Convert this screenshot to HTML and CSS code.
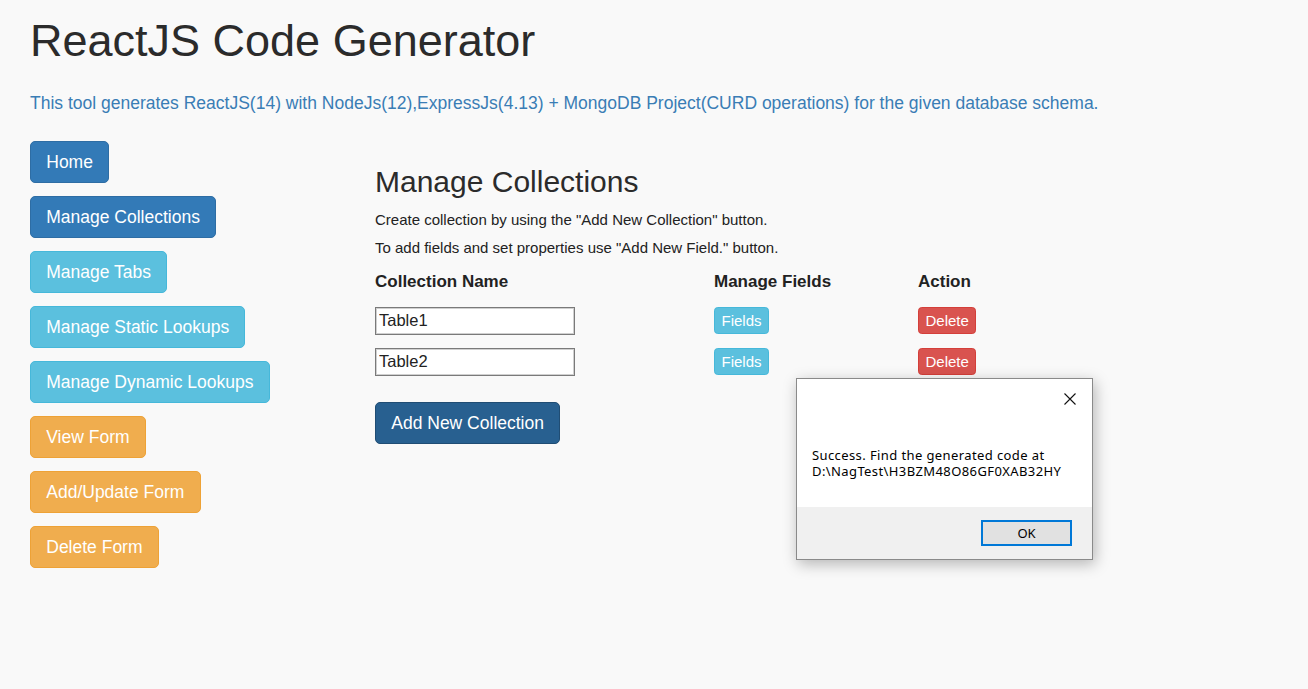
FILE: index.html
```html
<!DOCTYPE html>
<html lang="en">
<head>
    <meta charset="UTF-8">
    <meta name="viewport" content="width=device-width, initial-scale=1.0">
    <title>ReactJS Code Generator</title>
    <link rel="stylesheet" href="styles.css">
</head>
<body>

    <div class="page">
        <h1 class="title">ReactJS Code Generator</h1>
        <p class="intro">This tool generates ReactJS(14) with NodeJs(12),ExpressJs(4.13) + MongoDB Project(CURD operations) for the given database schema.</p>

        <div class="layout">
            <nav class="sidebar">
                <button class="btn btn-primary">Home</button>
                <button class="btn btn-primary">Manage Collections</button>
                <button class="btn btn-info">Manage Tabs</button>
                <button class="btn btn-info">Manage Static Lookups</button>
                <button class="btn btn-info">Manage Dynamic Lookups</button>
                <button class="btn btn-warning">View Form</button>
                <button class="btn btn-warning">Add/Update Form</button>
                <button class="btn btn-warning">Delete Form</button>
            </nav>

            <main class="content">
                <h3>Manage Collections</h3>
                <p class="hint">Create collection by using the "Add New Collection" button.</p>
                <p class="hint">To add fields and set properties use "Add New Field." button.</p>

                <table class="collections">
                    <thead>
                        <tr>
                            <th class="col-name">Collection Name</th>
                            <th class="col-fields">Manage Fields</th>
                            <th class="col-action">Action</th>
                        </tr>
                    </thead>
                    <tbody>
                        <tr>
                            <td><input type="text" value="Table1"></td>
                            <td><button class="btn btn-xs btn-info">Fields</button></td>
                            <td><button class="btn btn-xs btn-danger">Delete</button></td>
                        </tr>
                        <tr>
                            <td><input type="text" value="Table2"></td>
                            <td><button class="btn btn-xs btn-info">Fields</button></td>
                            <td><button class="btn btn-xs btn-danger">Delete</button></td>
                        </tr>
                    </tbody>
                </table>

                <button class="btn btn-primary active add-btn">Add New Collection</button>
            </main>
        </div>
    </div>

    <div class="msgbox">
        <div class="msg-body">
            <div class="msg-top">
                <svg class="msg-close" width="12" height="12" viewBox="0 0 12 12">
                    <path d="M0.5 0.5 L11.5 11.5 M11.5 0.5 L0.5 11.5" stroke="#111" stroke-width="1.1" fill="none"/>
                </svg>
            </div>
            <p class="msg-text">Success. Find the generated code at<br>D:\NagTest\H3BZM48O86GF0XAB32HY</p>
        </div>
        <div class="msg-footer">
            <button class="msg-ok">OK</button>
        </div>
    </div>

</body>
</html>
```

FILE: styles.css
```css
body {
    margin: 0;
    background: #f9f9f9;
    color: #333;
    font-family: "Liberation Sans", Arial, sans-serif;
    font-size: 17.5px;
    line-height: 25px;
}
.page {
    padding: 16px 0 0 30px;
}
.title {
    margin: 0;
    font-size: 45px;
    font-weight: normal;
    line-height: 49.5px;
    color: #2b2b2b;
}
.intro {
    margin: 25px 0 25px;
    color: #3a7db5;
}
.layout {
    display: flex;
}
.sidebar {
    width: 345px;
    display: flex;
    flex-direction: column;
    align-items: flex-start;
    gap: 13px;
}
.content {
    flex: 1;
}
h3 {
    margin: 24px 0 8px;
    font-size: 30px;
    font-weight: normal;
    line-height: 33px;
    color: #2b2b2b;
}
.hint {
    margin: 0;
    font-size: 15px;
    line-height: 28px;
    color: #222;
}

.btn {
    display: inline-block;
    padding: 7px 15.25px;
    font-family: inherit;
    font-size: 17.5px;
    line-height: 26px;
    color: #fff;
    border: 1px solid transparent;
    border-radius: 5px;
    cursor: pointer;
}
.btn-primary {
    background: #337ab7;
    border-color: #2e6da4;
}
.btn-primary.active {
    background: #286090;
    border-color: #204d74;
}
.btn-info {
    background: #5bc0de;
    border-color: #46b8da;
}
.btn-warning {
    background: #f0ad4e;
    border-color: #eea236;
}
.btn-danger {
    background: #d9534f;
    border-color: #d43f3a;
}
.btn-xs {
    padding: 1px 6.5px;
    font-size: 15px;
    line-height: 23.5px;
    border-radius: 3.75px;
}

.collections {
    margin-top: 2px;
    border-collapse: collapse;
    border-spacing: 0;
}
.collections th {
    padding: 5px 0 7px;
    text-align: left;
    font-size: 17px;
    font-weight: bold;
    color: #222;
}
.collections td {
    padding: 6px 0 7px;
    vertical-align: middle;
}
.col-name {
    width: 339px;
}
.col-fields {
    width: 204px;
}
.col-action {
    width: 97px;
}
.collections input {
    display: block;
    box-sizing: border-box;
    width: 200px;
    height: 28px;
    padding: 1px 3px;
    border: 1px solid #7a7a7a;
    box-shadow: inset 0 0 0 1px #d0d0d0;
    background: #fff;
    font-family: inherit;
    font-size: 16.5px;
    color: #222;
}
.add-btn {
    margin-top: 19px;
}

.msgbox {
    position: absolute;
    left: 796px;
    top: 378px;
    width: 295px;
    height: 180px;
    border: 1px solid #8a8a8a;
    background: #fff;
    box-shadow: 2px 4px 14px rgba(0, 0, 0, 0.28);
    display: flex;
    flex-direction: column;
    font-family: "Noto Sans", "Open Sans", sans-serif;
    font-size: 13px;
    line-height: 16px;
    color: #000;
}
.msg-body {
    height: 128px;
    padding: 0 15px;
}
.msg-top {
    height: 40px;
    display: flex;
    justify-content: flex-end;
    align-items: center;
    padding-right: 1px;
}
.msg-text {
    margin: 28px 0 0;
    letter-spacing: 0.4px;
}
.msg-footer {
    flex: 1;
    background: #f0f0f0;
    display: flex;
    justify-content: flex-end;
    align-items: flex-start;
    padding: 13px 20px 0 0;
}
.msg-ok {
    width: 91px;
    height: 26px;
    background: #e1e1e1;
    border: 2px solid #0078d7;
    font-family: inherit;
    font-size: 13px;
    color: #000;
}
```
